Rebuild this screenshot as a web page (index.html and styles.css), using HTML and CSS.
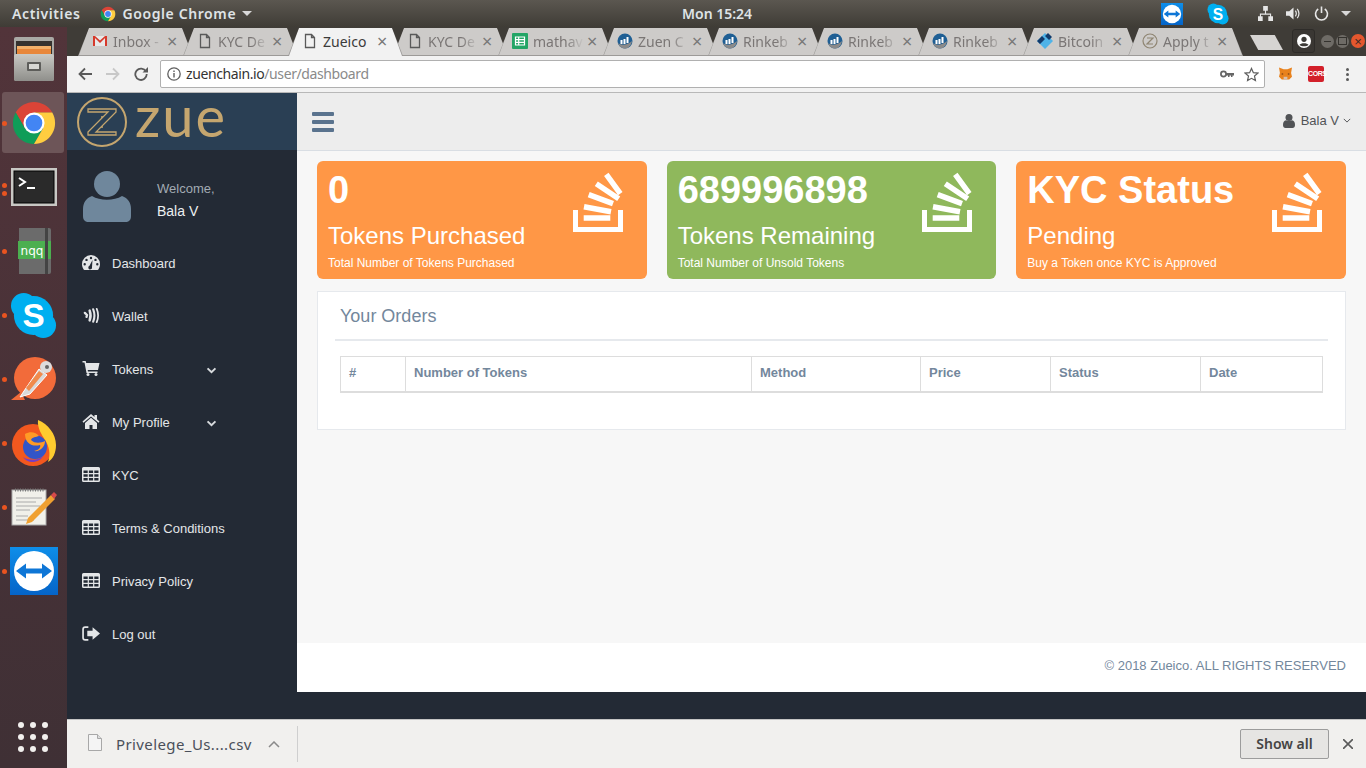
FILE: index.html
```html
<!DOCTYPE html>
<html>
<head>
	<meta charset="utf-8">
	<title>Zueico</title>
	<link rel="stylesheet" href="styles.css">
</head>
<body>
<svg class="defs" width="0" height="0">
	<defs>
		<linearGradient id="tv-blue" x1="0" y1="0" x2="0" y2="1">
			<stop offset="0" stop-color="#0e8ee9"/>
			<stop offset="1" stop-color="#0564c8"/>
		</linearGradient>
		<linearGradient id="files-front" x1="0" y1="0" x2="0" y2="1">
			<stop offset="0" stop-color="#c9c9c4"/>
			<stop offset="1" stop-color="#8f8f8b"/>
		</linearGradient>
	</defs>
	<symbol id="i-chrome" viewBox="0 0 48 48">
		<path fill="#db4437" d="M43.05 13A22 22 0 0 0 4.95 13L14.5 29.5 24 13z"/>
		<path fill="#0f9d58" d="M4.95 13A22 22 0 0 0 24 46L33.5 29.5 14.5 29.5z"/>
		<path fill="#ffcd40" d="M43.05 13A22 22 0 0 1 24 46L33.5 29.5 24 13z"/>
		<circle cx="24" cy="24" r="11" fill="#fff"/>
		<circle cx="24" cy="24" r="8.7" fill="#4285f4"/>
	</symbol>
	<symbol id="i-doc" viewBox="0 0 16 16">
		<path fill="none" stroke="#5a5a5a" stroke-width="1.3" d="M3.5 1.5h6l3 3v10h-9zM9.5 1.5v3h3"/>
	</symbol>
	<symbol id="i-zuen" viewBox="0 0 16 16">
		<circle cx="8" cy="8" r="7.5" fill="#1f5f94"/>
		<path fill="#8a8a8a" d="M1 10c3 2.500 9 2.500 14-2-.5 4-3.500 7.500-7 7.500S2 13 1 10z"/>
		<path fill="#fff" d="M3.500 7h2v4h-2zM6.500 6h2v5h-2zM9.500 4h2v6h-2z"/>
	</symbol>
	<symbol id="i-so" viewBox="0 0 50 60">
		<g fill="none" stroke="#fff">
			<path stroke-width="5" d="M2.500 38v19.500h45V38"/>
			<path stroke-width="5.500" d="M10.700 46h26.600M11 34.700l27 5M15.700 22.700l24.300 9M23.300 11.700l22.400 15M33.300 2.300l14 19.400"/>
		</g>
	</symbol>
	<symbol id="i-table" viewBox="0 0 18 15">
		<path fill="#e4e6e8" fill-rule="evenodd" d="M1.500 0h15A1.500 1.500 0 0 1 18 1.500v12a1.500 1.500 0 0 1-1.500 1.500h-15A1.500 1.500 0 0 1 0 13.500v-12A1.500 1.500 0 0 1 1.500 0zM1.500 3.500v2.500h4.200V3.500zM6.900 3.500v2.500h4.200V3.500zM12.300 3.500v2.500h4.200V3.500zM1.500 7.200v2.500h4.200V7.200zM6.900 7.200v2.500h4.200V7.200zM12.300 7.200v2.500h4.200V7.200zM1.500 10.900v2.600h4.200v-2.600zM6.900 10.900v2.600h4.200v-2.600zM12.300 10.900v2.600h4.200v-2.600z"/>
	</symbol>
	<symbol id="i-chev" viewBox="0 0 12 8">
		<path fill="none" stroke="#d8dbde" stroke-width="2.200" d="M1.500 1.500L6 6l4.500-4.500"/>
	</symbol>
	<symbol id="i-skype" viewBox="0 0 48 48">
		<circle cx="14" cy="14" r="13" fill="#00aff0"/>
		<circle cx="34" cy="34" r="13" fill="#00aff0"/>
		<circle cx="24" cy="24" r="20" fill="#00aff0"/>
	</symbol>
	<symbol id="i-tv" viewBox="0 0 48 48">
		<rect width="48" height="48" fill="url(#tv-blue)"/>
		<circle cx="24" cy="24" r="20" fill="#fff"/>
		<path fill="#0e76d6" d="M6 24l10-7.500v5h16v-5L42 24l-10 7.500v-5H16v5z"/>
	</symbol>
</svg>

<div class="topbar">
	<span class="tb-label">Activities</span>
	<svg class="tb-chrome"><use href="#i-chrome"/></svg>
	<span class="tb-label">Google Chrome</span>
	<span class="caret"></span>
	<span class="tb-clock">Mon 15:24</span>
	<div class="tb-tray">
		<svg class="tray-tv"><use href="#i-tv"/></svg>
		<svg class="tray-skype" viewBox="0 0 48 48"><use href="#i-skype"/><text x="24" y="36" text-anchor="middle" class="skype-s">S</text></svg>
		<svg class="tray-net" viewBox="0 0 16 16"><path fill="#e6e6e6" d="M5.500 0h5v5h-5zM7.400 5h1.200v3H14v3h-1.200V9.200H3.200V11H2V8h5.400zM0 11h5v5H0zM11 11h5v5h-5z"/></svg>
		<svg class="tray-vol" viewBox="0 0 16 16"><path fill="#e6e6e6" d="M0 5.500h3.500L8 1.500v13l-4.500-4H0z"/><path fill="none" stroke="#e6e6e6" stroke-width="1.300" d="M10 5c1.200 1.800 1.200 4.200 0 6M12 3c2.200 3 2.200 7 0 10"/></svg>
		<svg class="tray-pow" viewBox="0 0 16 16"><path fill="none" stroke="#e6e6e6" stroke-width="1.700" d="M4.500 3.200a6.400 6.400 0 1 0 7 0M8 .5v7"/></svg>
		<span class="caret"></span>
	</div>
</div>

<div class="desktop">
	<div class="dock">
		<div class="dock-item">
			<svg class="ic-files" viewBox="0 0 42 44">
				<rect x="1" y="0" width="40" height="44" rx="2" fill="#a9a9a5"/>
				<rect x="3" y="4" width="36" height="14" fill="#35322f"/>
				<rect x="4" y="9" width="34" height="3" fill="#f2b06a"/>
				<rect x="4" y="12" width="34" height="6" fill="#e8873a"/>
				<rect x="1" y="17" width="40" height="27" rx="2" fill="url(#files-front)"/>
				<rect x="14" y="25" width="14" height="9" rx="1" fill="#5d5d5a"/>
				<rect x="16" y="27" width="10" height="5" fill="#d8d8d4"/>
			</svg>
		</div>
		<div class="dock-item dock-active">
			<span class="dot"></span>
			<svg class="ic-chrome"><use href="#i-chrome"/></svg>
		</div>
		<div class="dock-item">
			<span class="dot dot-up"></span>
			<span class="dot dot-down"></span>
			<svg class="ic-term" viewBox="0 0 46 38">
				<rect width="46" height="38" fill="#c8c8c4"/>
				<rect x="3" y="3" width="40" height="32" fill="#2a2a2a" stroke="#000"/>
				<path fill="none" stroke="#fff" stroke-width="2" d="M8 10l6 4-6 4M16 20h8"/>
			</svg>
		</div>
		<div class="dock-item">
			<span class="dot"></span>
			<svg class="ic-nqq" viewBox="0 0 34 46">
				<path fill="#6b6b6b" d="M2 0h30a2 2 0 0 1 2 2v42a2 2 0 0 1-2 2H2z"/>
				<rect x="1" y="13" width="33" height="18" fill="#4caf50"/>
				<rect x="28" y="0" width="3" height="46" fill="#444"/>
				<text x="15" y="27" text-anchor="middle" class="nqq-text">nqq</text>
			</svg>
		</div>
		<div class="dock-item">
			<span class="dot"></span>
			<svg class="ic-skype" viewBox="0 0 48 48"><use href="#i-skype"/><text x="24" y="36" text-anchor="middle" class="skype-s">S</text></svg>
		</div>
		<div class="dock-item">
			<span class="dot"></span>
			<svg class="ic-postman" viewBox="0 0 46 46">
				<circle cx="24" cy="22" r="21" fill="#f26b3a"/>
				<path fill="#f26b3a" d="M0 44l10-8 4 8z"/>
				<path fill="#d9d9d9" stroke="#fff" d="M9 41l4-6L28 13l8 6-17 19z"/>
				<path fill="#f08a4b" d="M15 32l13-17 4 3-14 17z"/>
				<circle cx="35" cy="11" r="6" fill="#ddd"/>
				<circle cx="36" cy="11" r="2" fill="#666"/>
			</svg>
		</div>
		<div class="dock-item">
			<span class="dot"></span>
			<svg class="ic-ff" viewBox="0 0 46 46">
				<circle cx="22" cy="25" r="21" fill="#f2581f"/>
				<path fill="#ffcb2f" d="M27 0c10 4 18 14 18 25 0 8-3 14-8 17 3-8 1-16-3-22-3-5-8-12-7-20z"/>
				<circle cx="24" cy="27" r="12" fill="#3255c8"/>
				<path fill="#ff9a26" d="M14 14c5-3 11-2 14 2-3 1-7 1-8 4 4 4 10 3 14 1 0 6-5 11-11 10 5-1 7-4 6-6-7 2-15-1-15-11z"/>
				<path fill="#7a3fc0" d="M12 37c6 4 16 4 21-2-4 8-16 10-21 2z"/>
			</svg>
		</div>
		<div class="dock-item">
			<span class="dot"></span>
			<svg class="ic-note" viewBox="0 0 46 38">
				<rect x="1" y="2" width="34" height="35" fill="#f1f0ea" stroke="#aaa"/>
				<path stroke="#777" stroke-width="3" stroke-dasharray="1 1.500" d="M4 2h30"/>
				<path stroke="#aaa" d="M5 10h26M5 14h20M5 18h24M5 22h14M5 28h12M5 32h18"/>
				<path fill="#f0a030" d="M17 30L40 7l4 4-23 23-6 2z"/>
				<path fill="#d84a4a" d="M40 7l3-3 3 3-3 4z"/>
			</svg>
		</div>
		<div class="dock-item">
			<span class="dot"></span>
			<svg class="ic-tv"><use href="#i-tv"/></svg>
		</div>
		<div class="dock-apps">
			<span></span><span></span><span></span>
			<span></span><span></span><span></span>
			<span></span><span></span><span></span>
		</div>
	</div>

	<div class="browser">
		<div class="tabstrip">
			<div class="tab">
				<svg class="fav" viewBox="0 0 16 16"><path fill="#e8e8e8" d="M1 3h14v10H1z"/><path fill="#d6392b" d="M1 3h2v10H1zM13 3h2v10h-2z"/><path fill="#d6392b" d="M1 3h2l5 4.500L13 3h2L8 10z"/></svg>
				<span class="tab-title">Inbox - </span><span class="tab-x">&times;</span>
			</div>
			<div class="tab">
				<svg class="fav"><use href="#i-doc"/></svg>
				<span class="tab-title">KYC De</span><span class="tab-x">&times;</span>
			</div>
			<div class="tab tab-on">
				<svg class="fav"><use href="#i-doc"/></svg>
				<span class="tab-title">Zueico</span><span class="tab-x">&times;</span>
			</div>
			<div class="tab">
				<svg class="fav"><use href="#i-doc"/></svg>
				<span class="tab-title">KYC De</span><span class="tab-x">&times;</span>
			</div>
			<div class="tab">
				<svg class="fav" viewBox="0 0 16 16"><rect width="16" height="16" rx="1" fill="#23a566"/><path fill="none" stroke="#fff" stroke-width="1.200" d="M3.500 4h9v8h-9zM3.500 6.700h9M3.500 9.300h9M6.700 4v8"/></svg>
				<span class="tab-title">mathav</span><span class="tab-x">&times;</span>
			</div>
			<div class="tab">
				<svg class="fav"><use href="#i-zuen"/></svg>
				<span class="tab-title">Zuen C</span><span class="tab-x">&times;</span>
			</div>
			<div class="tab">
				<svg class="fav"><use href="#i-zuen"/></svg>
				<span class="tab-title">Rinkeb</span><span class="tab-x">&times;</span>
			</div>
			<div class="tab">
				<svg class="fav"><use href="#i-zuen"/></svg>
				<span class="tab-title">Rinkeb</span><span class="tab-x">&times;</span>
			</div>
			<div class="tab">
				<svg class="fav"><use href="#i-zuen"/></svg>
				<span class="tab-title">Rinkeb</span><span class="tab-x">&times;</span>
			</div>
			<div class="tab">
				<svg class="fav" viewBox="0 0 16 16"><path fill="#4fb3e8" d="M8 0l8 8-8 8-8-8z"/><path fill="#123a6b" d="M0 8l5-5 3 3-5 5zM8 3l3-3 4 4-3 3z"/></svg>
				<span class="tab-title">Bitcoin</span><span class="tab-x">&times;</span>
			</div>
			<div class="tab">
				<svg class="fav" viewBox="0 0 16 16"><circle cx="8" cy="8" r="7" fill="none" stroke="#8f8572" stroke-width="1.200"/><path fill="none" stroke="#8f8572" stroke-width="1.200" d="M5 5h6L5 11h6"/></svg>
				<span class="tab-title">Apply t</span><span class="tab-x">&times;</span>
			</div>
			<div class="newtab"></div>
			<div class="win-right">
				<div class="profile-btn">
					<svg viewBox="0 0 16 16"><circle cx="8" cy="8" r="8" fill="#fff"/><circle cx="8" cy="6" r="3" fill="#3c3a36"/><path fill="#3c3a36" d="M2.800 12.500C4 10 12 10 13.200 12.500 11 14.500 5 14.500 2.800 12.500z"/></svg>
				</div>
				<span class="win-btn win-min"></span>
				<span class="win-btn win-max"></span>
				<span class="win-btn win-close">&times;</span>
			</div>
		</div>

		<div class="toolbar">
			<svg class="tool" viewBox="0 0 14 14"><path fill="none" stroke="#5a5a5a" stroke-width="1.800" d="M14 7H2M7 1.500L1.500 7 7 12.500"/></svg>
			<svg class="tool tool-off" viewBox="0 0 14 14"><path fill="none" stroke="#c8c8c8" stroke-width="1.800" d="M0 7h12M7 1.500L12.500 7 7 12.500"/></svg>
			<svg class="tool" viewBox="0 0 14 14"><path fill="none" stroke="#5a5a5a" stroke-width="1.800" d="M12 4.500A5.700 5.700 0 1 0 12.700 7"/><path fill="#5a5a5a" d="M8.500 5.500H14V0z"/></svg>
			<div class="omnibox">
				<svg class="omni-info" viewBox="0 0 14 14"><circle cx="7" cy="7" r="6.200" fill="none" stroke="#5f5f5f" stroke-width="1.300"/><path fill="#5f5f5f" d="M6.300 6h1.400v4.500H6.300zM6.300 3.500h1.400v1.400H6.300z"/></svg>
				<span class="url">zuenchain.io<span class="url-path">/user/dashboard</span></span>
				<svg class="omni-key" viewBox="0 0 14 8"><circle cx="3.500" cy="4" r="2.600" fill="none" stroke="#666" stroke-width="1.700"/><path fill="#666" d="M6 3h8v2.500h-1.500V7H11V5.500H9.500V7H8V5.500H6z"/></svg>
				<svg class="omni-star" viewBox="0 0 16 16"><path fill="none" stroke="#5f5f5f" stroke-width="1.300" d="M8 1.500l2 4.500 4.800.5-3.600 3.200 1 4.800L8 12.100l-4.200 2.400 1-4.800L1.200 6.500 6 6z"/></svg>
			</div>
			<svg class="ext-fox" viewBox="0 0 14 14"><path fill="#e8821e" d="M0 0l5 2h4l5-2-1 6 1 4-3 3H3l-3-3 1-4z"/><path fill="#763d16" d="M3 6l2 1-2 1zM11 6L9 7l2 1z"/><path fill="#d7c1b3" d="M5 10h4v3H5z"/></svg>
			<span class="ext-cors">CORS</span>
			<span class="menu-dots"><i></i><i></i><i></i></span>
		</div>

		<div class="page">
			<div class="sidebar">
				<div class="brand">
					<svg class="brand-mark" viewBox="0 0 50 50">
						<circle cx="25" cy="25" r="24" fill="none" stroke="#c5a66f" stroke-width="2"/>
						<path fill="none" stroke="#c5a66f" stroke-width="1.300" d="M11 12h28v3L19 35h20v3H11v-3l20-20H11z"/>
						<circle cx="25" cy="20" r="1" fill="#c5a66f"/>
						<circle cx="25" cy="30" r="1" fill="#c5a66f"/>
					</svg>
					<span class="brand-name">zue</span>
				</div>
				<div class="user-box">
					<svg class="user-pic" viewBox="0 0 48 51">
						<circle cx="24" cy="13" r="13" fill="#6f879c"/>
						<path fill="#6f879c" d="M0 38c0-6 3-11 9-13 8 5 22 5 30 0 6 2 9 7 9 13v7c0 4-2 6-6 6H6c-4 0-6-2-6-6z"/>
					</svg>
					<div class="user-text">
						<span class="welcome">Welcome,</span>
						<span class="user-name">Bala V</span>
					</div>
				</div>
				<ul class="menu">
					<li>
						<svg class="menu-ic" viewBox="0 0 18 15"><path fill="#e4e6e8" fill-rule="evenodd" d="M9 0a9 9 0 0 1 9 9c0 2-.6 3.700-1.500 5.200-.2.400-.6.800-1 .8h-13c-.4 0-.8-.4-1-.8C.6 12.700 0 11 0 9a9 9 0 0 1 9-9zM2.700 8a1.200 1.200 0 1 0 0 2.400 1.200 1.200 0 0 0 0-2.400zM4.500 3.700a1.200 1.200 0 1 0 0 2.400 1.200 1.200 0 0 0 0-2.400zM9 1.800a1.200 1.200 0 1 0 0 2.400 1.200 1.200 0 0 0 0-2.400zM13.500 3.700a1.200 1.200 0 1 0 0 2.400 1.200 1.200 0 0 0 0-2.400zM15.300 8a1.200 1.200 0 1 0 0 2.400 1.200 1.200 0 0 0 0-2.400zM10.500 5L7.500 10.800a1.900 1.900 0 1 0 2.500 1.200z"/></svg>
						<span>Dashboard</span>
					</li>
					<li>
						<svg class="menu-ic" viewBox="0 0 18 17"><g fill="none" stroke="#e4e6e8" stroke-linecap="round"><path stroke-width="2.600" d="M2 5.500l2.500 2.500-.6 2"/><path stroke-width="2.800" d="M7.500 3c1.300 3.500 1.300 7.500 0 11"/><path stroke-width="2.400" d="M11.500 1.500c1.800 4.500 1.800 9.500 0 14"/><path stroke-width="2" d="M15.500 1c2.100 5 2.100 10 0 15"/></g></svg>
						<span>Wallet</span>
					</li>
					<li>
						<svg class="menu-ic" viewBox="0 0 17 15"><path fill="#e4e6e8" d="M0 0h3.200l.5 2H17l-1.500 7H5.200l.3 1.500H15V12H4L2 1.500H0z"/><circle cx="5.500" cy="13.500" r="1.500" fill="#e4e6e8"/><circle cx="13.500" cy="13.500" r="1.500" fill="#e4e6e8"/></svg>
						<span>Tokens</span>
						<svg class="menu-chev"><use href="#i-chev"/></svg>
					</li>
					<li>
						<svg class="menu-ic" viewBox="0 0 17 15"><path fill="#e4e6e8" d="M8.500 0L12 3V1h2.500v4.300L17 7.500l-1 1.200-7.500-6.300L1 8.700 0 7.500z"/><path fill="#e4e6e8" d="M8.500 3.800L14.500 9v6H10v-4H7v4H2.500V9z"/></svg>
						<span>My Profile</span>
						<svg class="menu-chev"><use href="#i-chev"/></svg>
					</li>
					<li>
						<svg class="menu-ic"><use href="#i-table"/></svg>
						<span>KYC</span>
					</li>
					<li>
						<svg class="menu-ic"><use href="#i-table"/></svg>
						<span>Terms &amp; Conditions</span>
					</li>
					<li>
						<svg class="menu-ic"><use href="#i-table"/></svg>
						<span>Privacy Policy</span>
					</li>
					<li>
						<svg class="menu-ic" viewBox="0 0 17 14"><path fill="none" stroke="#e4e6e8" stroke-width="1.600" d="M6 1H3a2 2 0 0 0-2 2v8a2 2 0 0 0 2 2h3"/><path fill="#e4e6e8" d="M5 4.500h5V1l7 6-7 6V9.500H5z"/></svg>
						<span>Log out</span>
					</li>
				</ul>
			</div>

			<div class="right-col">
				<div class="topnav">
					<span class="burger"><i></i><i></i><i></i></span>
					<div class="nav-user">
						<svg class="nav-user-ic" viewBox="0 0 12 14"><circle cx="6" cy="3.500" r="3.500" fill="#515356"/><path fill="#515356" d="M0 11c0-3 1-4.500 3-4.800 1.700 1.100 4.300 1.100 6 0 2 .3 3 1.800 3 4.800 0 2-1 3-2.500 3h-7C1 14 0 13 0 11z"/></svg>
						<span>Bala V</span>
						<svg class="nav-chev" viewBox="0 0 10 6"><path fill="none" stroke="#515356" stroke-width="1.200" d="M1 1l4 4 4-4"/></svg>
					</div>
				</div>
				<div class="content">
					<div class="cards">
						<div class="card card-orange">
							<div class="card-text">
								<div class="card-num">0</div>
								<div class="card-label">Tokens Purchased</div>
								<div class="card-desc">Total Number of Tokens Purchased</div>
							</div>
							<svg class="card-ic"><use href="#i-so"/></svg>
						</div>
						<div class="card card-green">
							<div class="card-text">
								<div class="card-num">689996898</div>
								<div class="card-label">Tokens Remaining</div>
								<div class="card-desc">Total Number of Unsold Tokens</div>
							</div>
							<svg class="card-ic"><use href="#i-so"/></svg>
						</div>
						<div class="card card-orange">
							<div class="card-text">
								<div class="card-num">KYC Status</div>
								<div class="card-label">Pending</div>
								<div class="card-desc">Buy a Token once KYC is Approved</div>
							</div>
							<svg class="card-ic"><use href="#i-so"/></svg>
						</div>
					</div>
					<div class="panel">
						<div class="panel-title"><h2>Your Orders</h2></div>
						<table class="orders">
							<thead>
								<tr>
									<th class="col-id">#</th>
									<th class="col-num">Number of Tokens</th>
									<th class="col-method">Method</th>
									<th class="col-price">Price</th>
									<th class="col-status">Status</th>
									<th>Date</th>
								</tr>
							</thead>
						</table>
					</div>
				</div>
				<div class="footer">© 2018 Zueico. ALL RIGHTS RESERVED</div>
			</div>
		</div>

		<div class="downloads">
			<svg class="dl-file" viewBox="0 0 14 17"><path fill="#f4f4f4" stroke="#a8a8a8" d="M.5.500h9l4 4v12H.5z"/><path fill="#ddd" stroke="#a8a8a8" d="M9.500.500v4h4"/></svg>
			<span class="dl-name">Privelege_Us....csv</span>
			<svg class="dl-chev" viewBox="0 0 12 7"><path fill="none" stroke="#8a8a8a" stroke-width="1.500" d="M1 6l5-5 5 5"/></svg>
			<span class="dl-sep"></span>
			<span class="dl-all">Show all</span>
			<svg class="dl-x" viewBox="0 0 10 10"><path stroke="#5a5a5a" stroke-width="1.600" d="M0 0l10 10M10 0L0 10"/></svg>
		</div>
	</div>
</div>
</body>
</html>
```

FILE: styles.css
```css
* {
	margin: 0;
	padding: 0;
	box-sizing: border-box;
}
body {
	width: 1366px;
	height: 768px;
	overflow: hidden;
	display: flex;
	flex-direction: column;
	font-family: "Liberation Sans", Arial, sans-serif;
	background: #232a35;
}
.defs {
	position: absolute;
}
.skype-s {
	font: bold 34px "Liberation Sans", sans-serif;
	fill: #fff;
}
.nqq-text {
	font: 12px "DejaVu Sans", sans-serif;
	fill: #fff;
}

/* ubuntu top bar */
.topbar {
	height: 27px;
	flex: none;
	display: flex;
	align-items: center;
	padding-left: 12px;
	background: linear-gradient(#5b5750, #3f3c36);
	color: #dfe3e6;
	position: relative;
}
.tb-label {
	font: 600 14px "Noto Sans", sans-serif;
	letter-spacing: .6px;
}
.tb-chrome {
	width: 16px;
	height: 16px;
	margin: 0 6px 0 20px;
}
.caret {
	width: 0;
	height: 0;
	margin-left: 6px;
	border-left: 5px solid transparent;
	border-right: 5px solid transparent;
	border-top: 5px solid #d8d8d8;
}
.tb-clock {
	position: absolute;
	left: 682px;
	font: 600 14px "Noto Sans", sans-serif;
}
.tb-tray {
	margin-left: auto;
	display: flex;
	align-items: center;
	padding-right: 15px;
}
.tray-tv {
	width: 22px;
	height: 22px;
	margin-right: 24px;
}
.tray-skype {
	width: 22px;
	height: 24px;
	margin-right: 29px;
}
.tray-net,
.tray-vol,
.tray-pow {
	width: 15px;
	height: 15px;
	margin-right: 13px;
}
.tray-pow {
	margin-right: 6px;
}

.desktop {
	flex: 1;
	display: flex;
	min-height: 0;
}

/* launcher */
.dock {
	width: 67px;
	flex: none;
	display: flex;
	flex-direction: column;
	background: linear-gradient(#52343a, #3f3035);
}
.dock-item {
	height: 64px;
	display: flex;
	align-items: center;
	justify-content: center;
	position: relative;
}
.dock-active::before {
	content: "";
	position: absolute;
	left: 2px;
	top: 1px;
	width: 62px;
	height: 61px;
	border-radius: 3px;
	background: #6d5558;
}
.dock-item svg {
	position: relative;
}
.dot {
	position: absolute;
	left: 2px;
	top: 30px;
	width: 5px;
	height: 5px;
	border-radius: 50%;
	background: #e95420;
}
.dot-up {
	top: 28px;
}
.dot-down {
	top: 36px;
}
.ic-files {
	width: 42px;
	height: 44px;
}
.ic-chrome {
	width: 46px;
	height: 46px;
}
.ic-term {
	width: 46px;
	height: 38px;
}
.ic-nqq {
	width: 34px;
	height: 46px;
}
.ic-skype {
	width: 47px;
	height: 47px;
}
.ic-postman {
	width: 46px;
	height: 46px;
}
.ic-ff {
	width: 46px;
	height: 46px;
}
.ic-note {
	width: 46px;
	height: 38px;
}
.ic-tv {
	width: 48px;
	height: 48px;
}
.dock-apps {
	margin-top: auto;
	margin-bottom: 16px;
	margin-left: 18px;
	width: 30px;
	display: grid;
	grid-template-columns: repeat(3, 6px);
	gap: 6px;
}
.dock-apps span {
	height: 6px;
	border-radius: 50%;
	background: #f2f0ee;
}

.browser {
	flex: 1;
	min-width: 0;
	display: flex;
	flex-direction: column;
}

/* tabs */
.tabstrip {
	height: 29px;
	flex: none;
	display: flex;
	align-items: flex-end;
	padding-left: 11px;
	background: #3f3c37;
	position: relative;
}
.tab {
	width: 115px;
	height: 28px;
	margin-right: -10px;
	flex: none;
	display: flex;
	align-items: center;
	padding: 0 16px 2px 14px;
	position: relative;
	background: #9c9a98;
	clip-path: polygon(11px 0, 104px 0, 115px 100%, 0 100%);
	font: 14px "Noto Sans", sans-serif;
	color: #7a7675;
}
.tab::before {
	content: "";
	position: absolute;
	left: 0;
	top: 0;
	right: 0;
	bottom: 1px;
	background: #cdcbc9;
	clip-path: polygon(11px 0, 104px 0, 114px 100%, 1px 100%);
}
.tab-on {
	z-index: 2;
	color: #3b3b3b;
}
.tab-on::before {
	bottom: 0;
	background: #f2f2f2;
}
.fav {
	width: 16px;
	height: 16px;
	flex: none;
	margin-right: 5px;
	position: relative;
}
.tab-title {
	width: 53px;
	flex: none;
	overflow: hidden;
	white-space: nowrap;
	position: relative;
	-webkit-mask-image: linear-gradient(to right, #000 62%, transparent 96%);
	mask-image: linear-gradient(to right, #000 62%, transparent 96%);
}
.tab-on .tab-title {
	-webkit-mask-image: none;
	mask-image: none;
}
.tab-x {
	position: relative;
	margin-left: 1px;
	font-size: 18px;
	line-height: 16px;
	color: #777;
}
.newtab {
	width: 33px;
	height: 15px;
	margin-left: 17px;
	margin-bottom: 6px;
	background: #d6d4d2;
	clip-path: polygon(0 0, 75% 0, 100% 100%, 25% 100%);
}
.win-right {
	margin-left: auto;
	align-self: flex-start;
	margin-top: 2px;
	display: flex;
	align-items: center;
	padding-right: 1px;
}
.profile-btn {
	width: 23px;
	height: 24px;
	margin-right: 6px;
	border: 1px solid #2e2c29;
	border-radius: 3px;
	background: #3a3733;
	display: flex;
	align-items: center;
	justify-content: center;
}
.profile-btn svg {
	width: 14px;
	height: 14px;
}
.win-btn {
	width: 13px;
	height: 13px;
	margin-right: 2px;
	border-radius: 50%;
	background: #6e6b66;
	display: flex;
	align-items: center;
	justify-content: center;
}
.win-min::before {
	content: "";
	width: 7px;
	height: 1px;
	background: #34322e;
}
.win-max::before {
	content: "";
	width: 7px;
	height: 6px;
	border: 1px solid #34322e;
}
.win-close {
	width: 14px;
	height: 14px;
	margin-right: 0;
	background: #e4572e;
	color: #3a2a24;
	font-size: 13px;
	line-height: 13px;
}

/* chrome toolbar */
.toolbar {
	height: 37px;
	flex: none;
	display: flex;
	align-items: center;
	padding-left: 11px;
	background: #f2f2f2;
	border-bottom: 1px solid #b8b8b8;
}
.tool {
	width: 14px;
	height: 14px;
	margin-right: 14px;
}
.omnibox {
	width: 1105px;
	height: 28px;
	margin-left: -2px;
	display: flex;
	align-items: center;
	padding: 0 5px 0 6px;
	background: #fff;
	border: 1px solid #b0b0b0;
	border-radius: 2px;
}
.omni-info {
	width: 14px;
	height: 14px;
	margin-right: 5px;
}
.url {
	font: 14px "Noto Sans", sans-serif;
	letter-spacing: -.4px;
	color: #333;
	padding-bottom: 2px;
}
.url-path {
	color: #8a8a8a;
}
.omni-key {
	width: 14px;
	height: 8px;
	margin-left: auto;
}
.omni-star {
	width: 15px;
	height: 15px;
	margin-left: 10px;
}
.ext-fox {
	width: 13px;
	height: 14px;
	margin-left: 14px;
}
.ext-cors {
	width: 16px;
	height: 16px;
	margin-left: 16px;
	border-radius: 2px;
	background: #d3202a;
	color: #fff;
	font: bold 7px/16px "Liberation Sans", sans-serif;
	letter-spacing: -.4px;
	text-align: center;
}
.menu-dots {
	margin-left: 22px;
	display: flex;
	flex-direction: column;
	gap: 2px;
}
.menu-dots i {
	width: 3px;
	height: 3px;
	border-radius: 50%;
	background: #5a5a5a;
}

/* page */
.page {
	flex: 1;
	min-height: 0;
	display: flex;
	background: #232a35;
}
.sidebar {
	width: 230px;
	flex: none;
	color: #e4e6e8;
}
.brand {
	height: 57px;
	display: flex;
	align-items: center;
	padding-left: 10px;
	background: #2a3f54;
}
.brand-mark {
	width: 50px;
	height: 50px;
}
.brand-name {
	margin: 0 0 11px 8px;
	font: 56px/46px Lato, sans-serif;
	letter-spacing: 2px;
	color: #c5a66f;
}
.user-box {
	height: 87px;
	display: flex;
	padding: 21px 0 0 16px;
}
.user-pic {
	width: 48px;
	height: 51px;
}
.user-text {
	margin-left: 26px;
	display: flex;
	flex-direction: column;
}
.welcome {
	font-size: 13px;
	line-height: 17px;
	margin-top: 9px;
	color: #a2aab3;
}
.user-name {
	font-size: 14px;
	line-height: 18px;
	margin-top: 5px;
	color: #ecf0f1;
}
.menu {
	list-style: none;
}
.menu li {
	height: 53px;
	display: flex;
	align-items: center;
	padding-left: 15px;
	font-size: 13px;
	position: relative;
}
.menu-ic {
	width: 18px;
	height: 15px;
	margin-right: 12px;
	margin-top: -3px;
}
.menu-chev {
	width: 11px;
	height: 7px;
	position: absolute;
	left: 139px;
	top: 24px;
}

.right-col {
	flex: 1;
	min-width: 0;
	display: flex;
	flex-direction: column;
	margin-bottom: 27px;
	background: #f7f7f7;
}
.topnav {
	height: 58px;
	flex: none;
	display: flex;
	align-items: center;
	justify-content: space-between;
	padding: 0 15px;
	background: #ededed;
	border-bottom: 1px solid #d9dee4;
}
.burger {
	display: flex;
	flex-direction: column;
	gap: 4px;
}
.burger i {
	width: 22px;
	height: 4px;
	border-radius: 1px;
	background: #5a738e;
}
.nav-user {
	display: flex;
	align-items: center;
	font-size: 13px;
	color: #515356;
	padding-bottom: 2px;
}
.nav-user-ic {
	width: 12px;
	height: 14px;
	margin-right: 6px;
}
.nav-chev {
	width: 8px;
	height: 5px;
	margin-left: 4px;
}

.content {
	flex: 1;
	padding: 10px 20px 0;
	min-height: 0;
}
.cards {
	display: grid;
	grid-template-columns: repeat(3, 1fr);
	gap: 20px;
}
.card {
	height: 118px;
	display: flex;
	justify-content: space-between;
	padding: 8px 24px 0 11px;
	border-radius: 6px;
	color: #fff;
}
.card-orange {
	background: #ff9746;
}
.card-green {
	background: #8fb85c;
}
.card-num {
	font-size: 38px;
	font-weight: bold;
	line-height: 42px;
}
.card-label {
	margin-top: 10px;
	font-size: 24px;
	line-height: 30px;
}
.card-desc {
	margin-top: 3px;
	font-size: 12px;
	line-height: 18px;
}
.card-ic {
	width: 50px;
	height: 60px;
	margin-top: 3px;
	flex: none;
}
.panel {
	height: 139px;
	margin-top: 12px;
	padding: 0 17px;
	background: #fff;
	border: 1px solid #e6e9ed;
}
.panel-title {
	height: 49px;
	padding-left: 5px;
	border-bottom: 2px solid #e6e9ed;
}
.panel-title h2 {
	font-size: 18px;
	font-weight: normal;
	line-height: 48px;
	color: #73879c;
}
.orders {
	width: 983px;
	margin: 15px 0 0 5px;
	table-layout: fixed;
	border-collapse: collapse;
	color: #73879c;
}
.orders th {
	height: 35px;
	padding: 0 0 3px 8px;
	text-align: left;
	font-size: 13px;
	border: 1px solid #ddd;
	border-bottom-width: 2px;
}
.col-id {
	width: 65px;
}
.col-num {
	width: 346px;
}
.col-method {
	width: 169px;
}
.col-price {
	width: 130px;
}
.col-status {
	width: 150px;
}
.footer {
	height: 49px;
	flex: none;
	padding: 14px 20px 0 0;
	text-align: right;
	font-size: 13px;
	line-height: 17px;
	color: #73879c;
	background: #fff;
}

/* download shelf */
.downloads {
	height: 49px;
	flex: none;
	display: flex;
	align-items: center;
	padding-left: 21px;
	background: #f1f0ee;
	border-top: 1px solid #c4c4c4;
}
.dl-file {
	width: 14px;
	height: 17px;
	margin-top: -4px;
}
.dl-name {
	width: 136px;
	margin-left: 14px;
	font: 15px "Noto Sans", sans-serif;
	letter-spacing: .4px;
	white-space: nowrap;
	color: #4a4f5a;
}
.dl-chev {
	width: 12px;
	height: 7px;
	margin-left: 16px;
}
.dl-sep {
	width: 1px;
	height: 36px;
	margin-left: 17px;
	background: #cfcfcf;
}
.dl-all {
	width: 89px;
	height: 30px;
	margin-left: auto;
	border: 1px solid #9c9c9c;
	border-radius: 2px;
	background: #e6e5e3;
	font: 600 14px/28px "Noto Sans", sans-serif;
	text-align: center;
	color: #444;
}
.dl-x {
	width: 10px;
	height: 10px;
	margin: 0 13px 0 14px;
}
```
